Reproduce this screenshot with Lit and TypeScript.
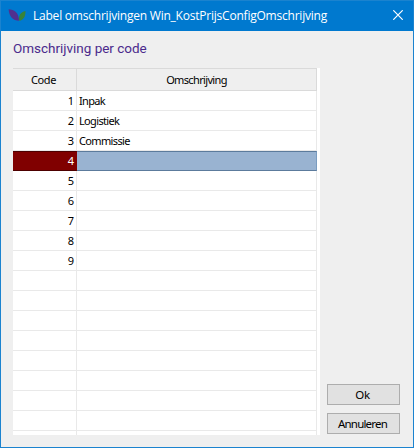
import { LitElement, html, css } from "lit";
import { customElement, property, state } from "lit/decorators.js";
import { classMap } from "lit/directives/class-map.js";

interface Row {
  code: string;
  text: string;
}

const descriptions = ["Inpak", "Logistiek", "Commissie"];

@customElement("title-bar")
export class TitleBar extends LitElement {
  @property() heading = "";

  static styles = css`
    :host {
      display: flex;
      align-items: center;
      height: 30px;
      background: #0079cf;
      color: #fff;
      font: 12px/30px "Open Sans", "Noto Sans", sans-serif;
    }
    .logo {
      flex: none;
      margin-left: 7px;
      width: 18px;
      height: 14px;
    }
    .text {
      flex: 1;
      margin-left: 7px;
      white-space: nowrap;
      letter-spacing: -0.22px;
    }
    .close {
      flex: none;
      width: 10px;
      height: 10px;
      margin: 0 10px 2px 0;
    }
  `;

  render() {
    return html`
      <svg class="logo" viewBox="0 0 18 14">
        <path d="M0.600 0.200C6 0.500 11 3.500 11 11.700C5 11.500 1 7.500 0.600 0.200Z" fill="#51308f" />
        <path d="M17.500 1.900C17.600 7.500 15.500 11 11.200 11.700C10.300 6.500 12.500 2.900 17.500 1.900Z" fill="#37833a" />
      </svg>
      <span class="text">${this.heading}</span>
      <svg class="close" viewBox="0 0 10 10">
        <path d="M0.300 0.300L9.700 9.700M9.700 0.300L0.300 9.700" stroke="#fff" stroke-width="1.200" fill="none" />
      </svg>
    `;
  }
}

@customElement("code-grid")
export class CodeGrid extends LitElement {
  @property({ attribute: false }) rows: Row[] = [];
  @property({ type: Number }) selected = -1;

  static styles = css`
    :host {
      display: block;
      box-sizing: border-box;
      width: 307px;
      height: 367px;
      padding-right: 3px;
      overflow: hidden;
      background: #fff;
      color: #000;
      font: 11px/19px "Noto Sans", "Open Sans", sans-serif;
      letter-spacing: -0.65px;
    }
    .row {
      display: grid;
      grid-template-columns: 64px 240px;
      height: 20px;
    }
    .cell {
      box-sizing: border-box;
      height: 20px;
      border-right: 1px solid #e9e9e9;
      border-bottom: 1px solid #e9e9e9;
      padding: 0 2px;
      white-space: nowrap;
    }
    .code {
      text-align: right;
      letter-spacing: 0;
    }
    .head {
      height: 23px;
    }
    .head .cell {
      height: 23px;
      border-top: 1px solid #dadada;
      border-color: #dadada;
      background: #efefef;
      text-align: center;
      line-height: 21px;
    }
    .head .cell:first-child {
      padding-right: 4px;
      letter-spacing: -0.35px;
    }
    .selected .cell {
      border-top: 1px solid #5c7b9c;
      border-bottom-color: #5c7b9c;
      border-right-color: #7a9cc0;
      background: #99b3d1;
      line-height: 17px;
    }
    .selected .code {
      border-color: #4d0000;
      border-right-color: #800000;
      background: #800000;
      color: #fff;
    }
  `;

  render() {
    return html`
      <div class="row head">
        <div class="cell">Code</div>
        <div class="cell">Omschrijving</div>
      </div>
      ${this.rows.map(
        (row, index) => html`
          <div class=${classMap({ row: true, selected: index === this.selected })}>
            <div class="cell code">${row.code}</div>
            <div class="cell">${row.text}</div>
          </div>
        `,
      )}
    `;
  }
}

@customElement("app-root")
export class AppRoot extends LitElement {
  @state() private selected = 3;

  private rows: Row[] = Array.from({ length: 18 }, (_, i) => ({
    code: i < 9 ? String(i + 1) : "",
    text: descriptions[i] ?? "",
  }));

  static styles = css`
    :host {
      display: flex;
      flex-direction: column;
      box-sizing: border-box;
      width: 414px;
      height: 448px;
      border: 1px solid #1b83cf;
      background: #efefef;
      overflow: hidden;
    }
    .heading {
      height: 37px;
      padding-left: 12px;
      color: #4b2a8c;
      font: 13.500px/35px Roboto, "Liberation Sans", sans-serif;
      letter-spacing: -0.02px;
    }
    .content {
      display: flex;
      gap: 7px;
      padding-left: 12px;
    }
    .actions {
      display: flex;
      flex-direction: column;
      justify-content: flex-end;
      gap: 8px;
      padding-bottom: 1px;
    }
    .button {
      box-sizing: border-box;
      width: 73px;
      height: 21px;
      margin: 0;
      padding: 0 2px 0 0;
      border: 1px solid #adadad;
      border-radius: 0;
      background: #e1e1e1;
      color: #000;
      font: 11.500px/19px "Noto Sans", "Open Sans", sans-serif;
      letter-spacing: -0.8px;
    }
    .button:first-child {
      letter-spacing: -0.2px;
    }
  `;

  render() {
    return html`
      <title-bar heading="Label omschrijvingen Win_KostPrijsConfigOmschrijving"></title-bar>
      <div class="heading">Omschrijving per code</div>
      <div class="content">
        <code-grid .rows=${this.rows} .selected=${this.selected}></code-grid>
        <div class="actions">
          <button class="button">Ok</button>
          <button class="button">Annuleren</button>
        </div>
      </div>
    `;
  }
}
